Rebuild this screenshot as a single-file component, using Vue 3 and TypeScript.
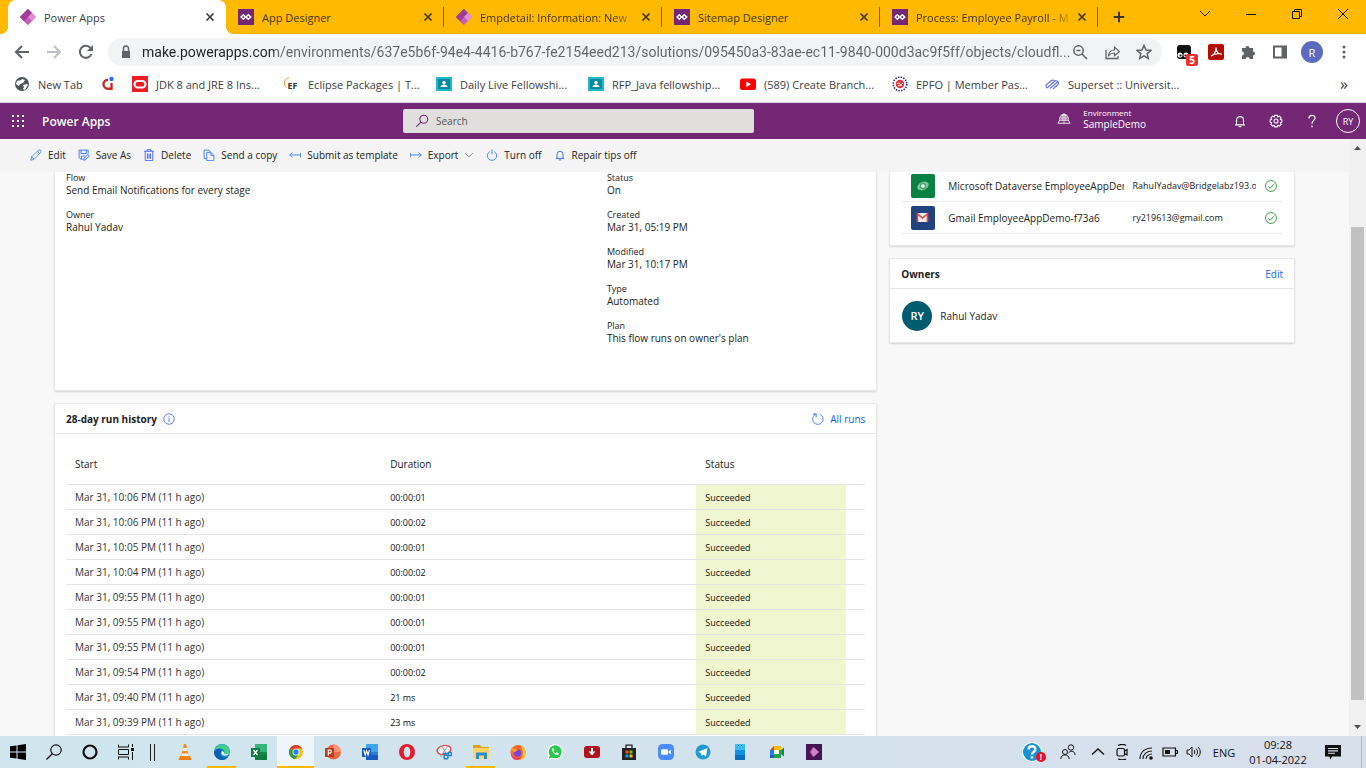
<script setup lang="ts">
import { ref } from 'vue'

interface Tab { title: string; icon: string; active?: boolean; faded?: boolean }
interface Bookmark { label: string; icon: string; size: string }
interface Command { label: string; icon: string; menu?: boolean }
interface Field { label: string; value: string }
interface Connection { icon: string; name: string; account: string }
interface Run { start: string; duration: string }
interface TaskApp { name: string; icon: string; state?: string }

const diamond =
  '<path d="M8 0 0 8l8 8z" fill="#8b2c83"/><path d="M4 4 8 8l-4 4-4-4z" fill="#a43a9b"/><path d="M8 0l8 8-8 8-4-4 4-4-4-4z" fill="#c55fb8"/><path d="M8 0l4 4-4 4-4-4z" fill="#9c3d93"/><path d="M12 4l4 4-4 4-4-4z" fill="#e08fd5"/>'
const dynamics =
  '<path d="M0 0h16v16H0z" fill="#742774"/><path d="M5.300 5.800 7.500 8l-2.200 2.200L3.100 8z" fill="none" stroke="#fff" stroke-width="1.500"/><path d="M10.300 5.800 12.700 8l-2.400 2.200L8 8z" fill="none" stroke="#fff" stroke-width="1.500"/>'
const classroom =
  '<path d="M0 1h16v14H0z" fill="#1fb6cf"/><path d="M2 3h12v10H2z" fill="#0b8a9b"/><circle cx="8" cy="6.500" r="1.700" fill="#fff"/><path d="M4.500 11c0-3.500 7-3.500 7 0z" fill="#fff"/>'
const office = (dark: string, mid: string, light: string) =>
  `<path d="M4 0h12v8H4z" fill="${light}"/><path d="M4 8h12v8H4z" fill="${mid}"/><path d="M4 11h12v5H4z" fill="${dark}"/><path d="M0 4h9v9H0z" fill="${dark}"/>`

const icons: Record<string, string> = {
  diamond,
  dynamics,
  classroom,
  globe: '<circle cx="8" cy="8" r="7" fill="#50555b"/><path d="M3 5c2-1 4 0 5-2l3 1-2 3-3 1-1 2-3-2zM9 9l4-1 1 1-3 5-2-1 1-2z" fill="#fff"/>',
  swirl: '<path d="M8 3.800A4.500 4.500 0 1 0 8 12.800M8 12.800h3.500V7" fill="none" stroke="#c62828" stroke-width="2.400"/><circle cx="11.500" cy="3" r="2.200" fill="#2f6bff"/>',
  oracle: '<path d="M0 0h16v16H0z" fill="#ee1c24"/><rect x="2.500" y="5" width="11" height="6.500" rx="3.200" fill="none" stroke="#fff" stroke-width="2"/>',
  eclipse: '<path d="M5 1.500A6 6 0 0 0 2.500 12" fill="none" stroke="#f7a14a"/><text x="3.500" y="13" font-family="Open Sans" font-weight="700" font-size="9" fill="#333">EF</text>',
  youtube: '<rect y="2.500" width="16" height="11.500" rx="2.500" fill="#f00"/><path d="M6.300 5.500v5.400L11 8.200z" fill="#fff"/>',
  epfo: '<circle cx="8" cy="8" r="6.800" fill="#fff" stroke="#25318d" stroke-width="1.600" stroke-dasharray="1.500 1.200"/><circle cx="8" cy="8" r="4.300" fill="#e2383f"/><path d="M5 8c2-3 3 3 6-1M6 10c2-2 3 1 4-1" stroke="#fff" fill="none"/>',
  superset: '<path d="M1.500 9.500 8 4M3 12 11.500 4.500M6 12.500 14 5.500M9 13l5.500-5M1.500 9.500 3 12M8 4l3.500.5L14 5.500l.5 2.500" stroke="#6f78e8" stroke-width="1.200" fill="none"/>',
  back: '<path d="M15 8H2M8 2 2 8l6 6" stroke="#5f6368" stroke-width="2" fill="none"/>',
  forward: '<path d="M1 8h13M8 2l6 6-6 6" stroke="#bdc1c6" stroke-width="2" fill="none"/>',
  reload: '<path d="M13.500 10A6 6 0 1 1 12.500 4" stroke="#5f6368" stroke-width="2" fill="none"/><path d="M15 1v6H9z" fill="#5f6368"/>',
  lock: '<path d="M4 7h8v7H4z" fill="#5f6368"/><path d="M5.500 7V4.500a2.500 2.500 0 0 1 5 0V7" stroke="#5f6368" stroke-width="1.500" fill="none"/>',
  zoomout: '<circle cx="6.500" cy="6.500" r="4.700" stroke="#5f6368" stroke-width="1.500" fill="none"/><path d="M10 10l5 5M4.500 6.500h4" stroke="#5f6368" stroke-width="1.600"/>',
  share: '<path d="M2 6v8.500h12V12" stroke="#5f6368" stroke-width="1.300" fill="none"/><path d="M4.500 11.500C5 7.500 7.500 6 10.500 6V3l5 4.500-5 4.300V9c-3 0-4.500.8-6 2.500z" stroke="#5f6368" stroke-width="1.200" fill="none"/>',
  star: '<path d="M8 1.500l2 4.500 4.900.400-3.700 3.200 1.100 4.800L8 11.900l-4.300 2.500 1.100-4.800L1.100 6.400 6 6z" stroke="#5f6368" stroke-width="1.500" fill="none"/>',
  tamper: '<rect x="1" y="1" width="14" height="14" rx="3" fill="#111"/><circle cx="4" cy="11" r="2.500" fill="#fff"/><circle cx="10" cy="11" r="2.500" fill="#fff"/><circle cx="4.500" cy="11.500" r="1.100" fill="#111"/><circle cx="9.500" cy="11.500" r="1.100" fill="#111"/>',
  acrobat: '<rect width="16" height="16" rx="2" fill="#b30b00"/><path d="M3 12c3-1 5-4 5-8.500C8 8 11 10.500 13.500 10 10 9 6 10 3 12z" stroke="#fff" stroke-width="1.300" fill="none"/>',
  puzzle: '<path d="M2 4h3.500a2 2 0 1 1 4 0H13v3.500a2 2 0 1 1 0 4V15H9.500a1.900 1.900 0 1 0-3.800 0H2v-3.500a2 2 0 1 0 0-4z" fill="#5f6368"/>',
  panel: '<rect x="2" y="2.500" width="12" height="11" fill="none" stroke="#5f6368" stroke-width="2"/><path d="M9.500 2.500H14v11H9.500z" fill="#5f6368"/>',
  dots: '<circle cx="8" cy="3" r="1.500" fill="#5f6368"/><circle cx="8" cy="8" r="1.500" fill="#5f6368"/><circle cx="8" cy="13" r="1.500" fill="#5f6368"/>',
  close: '<path d="M4 4l8 8M12 4l-8 8" stroke="currentColor" stroke-width="2"/>',
  plus: '<path d="M8 2v12M2 8h12" stroke="#3c3116" stroke-width="2.200"/>',
  wchev: '<path d="M3 5l5 5 5-5" stroke="#222" fill="none"/>',
  wmin: '<path d="M3 8.500h10" stroke="#111"/>',
  wmax: '<path d="M3.500 5.500h7v7h-7zM5.500 5V3.500h7v7H11" stroke="#111" fill="none"/>',
  wclose: '<path d="M3 3l10 10M13 3 3 13" stroke="#111"/>',
  search: '<circle cx="10" cy="6" r="4.500" stroke="#742774" stroke-width="1.200" fill="none"/><path d="M6.800 9.200 1.500 14.500" stroke="#742774" stroke-width="1.300"/>',
  env: '<path d="M1 14h14l-2-3.500H3z" fill="none" stroke="#fff"/><path d="M3.500 11a5 5 0 1 1 9 0M8 3v11M3 8h10M4 5.500h8M6 11V6l2-3 2 3v5" stroke="#fff" stroke-width=".9" fill="none"/>',
  bell: '<path d="M2.500 12.500h11M4 12.500V7a4 4 0 0 1 8 0v5.500M6.500 14.500h3" stroke="currentColor" stroke-width="1.300" fill="none"/>',
  gear: '<path d="M6.500 1.500h3l.6 1.800 1.800-.9 2 2-.9 1.800 1.700.6v2.600l-1.700.6.9 1.800-2 2-1.800-.9-.6 1.800h-3l-.6-1.800-1.800.9-2-2 .9-1.800-1.700-.6V6.800L3 6.200l-.9-1.800 2-2 1.800.9z" stroke="#fff" stroke-width="1.200" fill="none"/><circle cx="8" cy="8" r="2.300" fill="none" stroke="#fff" stroke-width="1.200"/>',
  help: '<path d="M4.500 5c0-4.500 7-4.500 7-.5C11.500 7.500 8 7 8 11" stroke="#fff" stroke-width="1.300" fill="none"/><path d="M8 13v2" stroke="#fff" stroke-width="1.500"/>',
  edit: '<path d="M1 15l1.200-4.500L11 1.700a1.800 1.800 0 0 1 3.200 3L5.500 13.700zM2.200 10.500l3.300 3.200M9.800 3l3.200 3.200" stroke="#3b7cff" stroke-width="1.100" fill="none"/>',
  save: '<path d="M7 13.500H3.500l-2-2v-10h12v5M4 1.500V6h7V1.500M4.500 13.500V9.500h5M7.500 15l.7-2.700 5-5 2 2-5 5z" stroke="#3b7cff" stroke-width="1.300" fill="none"/>',
  trash: '<path d="M1.500 3h13M5.500 3V1h5v2M3 3v12.500h10V3M6 6v7M8 6v7M10 6v7" stroke="#3b5cff" stroke-width="1.200" fill="none"/>',
  copy: '<path d="M5 12.500H1.500v-11H8L10 4M5 4.500h5.500l4 4v7H5zM10.500 4.500v4h4" stroke="#3b7cff" stroke-width="1.200" fill="none"/>',
  submit: '<path d="M15.500 5v6M15 8H1M4.500 4.500 1 8l3.500 3.500" stroke="#3b7cff" stroke-width="1.200" fill="none"/>',
  exporting: '<path d="M.5 5v6M1 8h14M11.500 4.500 15 8l-3.500 3.500" stroke="#3b7cff" stroke-width="1.200" fill="none"/>',
  power: '<path d="M5 3.500a6.200 6.200 0 1 0 6 0M8 .5V7" stroke="#3b7cff" stroke-width="1.200" fill="none"/>',
  chevron: '<path d="M2 5l6 6 6-6" stroke="#666" stroke-width="1.200" fill="none"/>',
  check: '<circle cx="8" cy="8" r="7.300" stroke="#2d9a35" stroke-width="1.200" fill="none"/><path d="M4.500 8.500 7 11l5-6" stroke="#2d9a35" stroke-width="1.200" fill="none"/>',
  info: '<circle cx="8" cy="8" r="7" stroke="#4a6dff" stroke-width="1.200" fill="none"/><path d="M8 7v5M8 4.500V6" stroke="#4a6dff" stroke-width="1.200"/>',
  refresh: '<path d="M10.500 1.700A7 7 0 1 1 4 2.300" stroke="#3b7cff" stroke-width="1.200" fill="none"/><path d="M1.500 1.500h4v4" stroke="#3b7cff" stroke-width="1.400" fill="none"/>',
  dataverse: '<rect width="24" height="24" rx="2" fill="#088142"/><ellipse cx="12" cy="12" rx="6" ry="4" transform="rotate(-25 12 12)" fill="#7fc79f"/><circle cx="12" cy="12" r="3.200" fill="#4aa673"/><circle cx="12" cy="12" r="1.800" fill="#fff"/>',
  gmail: '<rect width="24" height="24" rx="2" fill="#20427f"/><path d="M6 7h11v9H6z" fill="#f3e9e9"/><path d="M6.500 16V8l5 4 5-4v8" stroke="#dc4a41" stroke-width="1.600" fill="none"/>',
  windows: '<path d="M0 2.300 6.500 1.400v6.100H0zM7.500 1.200 16 0v7.500H7.500zM0 8.500h6.500v6.100L0 13.700zM7.500 8.500H16V16l-8.500-1.200z" fill="#000"/>',
  tsearch: '<circle cx="10" cy="6" r="5.200" stroke="#111" stroke-width="1.200" fill="none"/><path d="M6.300 9.700.5 15.500" stroke="#111" stroke-width="1.300"/>',
  cortana: '<circle cx="8" cy="8" r="6.500" stroke="#111" stroke-width="2.200" fill="none"/>',
  taskview: '<path d="M.5 3.500v-3M.5 3h10V.5M.5 12.500v3M.5 13h10v2.500M.5 5.500h10v5H.5zM14.500 0v3M14.500 8v8" stroke="#111" fill="none"/><path d="M13 4h3v3h-3z" fill="#111"/>',
  vlc: '<path d="M3 12h10l1.500 4h-13z" fill="#ee7d12"/><path d="M7 0h2l3.200 13H3.800z" fill="#f58a1f"/><path d="M6 4h4l.7 3H5.300zM4.700 9.500h6.600l.5 2.500H4.200z" fill="#eef1f2"/>',
  edge: '<circle cx="8" cy="8" r="8" fill="#168bd2"/><path d="M1 6C2-1 14-2 16 7c0 4-5 4-6 2 2-4-4-6-9-3z" fill="#46cf86"/><path d="M1 7c2-4 9-2 6 1-2 4 2 7 7 5-5 6-14 2-14-5z" fill="#0f5fae"/><path d="M8 7c-2 3 1 6 6 4l2-2c-3 2-7 1-6-1z" fill="#dff3f8"/>',
  excel: office('#107c41', '#17864b', '#33b577') + '<path d="M2.500 6l4 5M6.500 6l-4 5" stroke="#fff" stroke-width="1.300"/>',
  chrome: '<circle cx="8" cy="8" r="7" fill="#fbc116"/><path d="M8 8 1.900 4.500A7 7 0 0 1 14.100 4.500H8z" fill="#e33b2e"/><path d="M8 8 1.900 4.500A7 7 0 0 0 7.500 15L11 9.500z" fill="#2a9d48"/><circle cx="8" cy="8" r="3.500" fill="#fff"/><circle cx="8" cy="8" r="2.700" fill="#2f7de9"/>',
  powerpoint: '<circle cx="8.500" cy="8" r="7.500" fill="#e8694a"/><path d="M8 .5A7.500 7.500 0 0 1 16 8H8z" fill="#ff9478"/><path d="M0 4h9v9H0z" fill="#bd3b1d"/><path d="M3.300 11.500V6h1.500a1.500 1.500 0 0 1 0 3.200H3.300" stroke="#fff" stroke-width="1.200" fill="none"/>',
  word: office('#185abd', '#2b7cd3', '#41a5ee') + '<path d="M1.800 6l1.400 5 1.400-4.500L6 11l1.400-5" stroke="#fff" stroke-width="1.100" fill="none"/>',
  opera: '<circle cx="8" cy="8" r="8" fill="#e41b2d"/><ellipse cx="8" cy="8" rx="3.300" ry="5.500" fill="#d3e5ee"/>',
  snip: '<ellipse cx="8" cy="6" rx="7" ry="4.500" transform="rotate(-12 8 6)" stroke="#dd4b4b" stroke-width="1.400" fill="#f4f6f8"/><path d="M4 13 12 2M6 2l5 9" stroke="#9aa5ad"/><circle cx="10" cy="13" r="2" stroke="#2080cf" stroke-width="1.500" fill="none"/><circle cx="14" cy="10" r="1.700" stroke="#2080cf" stroke-width="1.500" fill="none"/><path d="M7 9.500h5" stroke="#2080cf" stroke-width="1.500"/>',
  explorer: '<path d="M0 1h7l1.500 2H16v4H0z" fill="#e0a01a"/><path d="M0 4h16v11H0z" fill="#fbd568"/><path d="M3 15V8.500h11V15h-3v-3.500H6V15z" fill="#2d8bd6"/>',
  firefox: '<circle cx="8" cy="8.500" r="7.500" fill="#ff6a2b"/><path d="M10 0c1 3 6 4 6 9s-4 7-8 7c5-2 7-6 2-16z" fill="#ffc62b"/><circle cx="7.500" cy="9" r="3.800" fill="#7a42d8"/><path d="M1 4c2 0 4 1 8 2-3 0-3 3-5 2S1 7 1 4z" fill="#ff9b1f"/><path d="M1 9c2 6 8 6 11 3-2 6-11 5-11-3z" fill="#f7305f"/>',
  whatsapp: '<circle cx="8.200" cy="7.800" r="7.800" fill="#fff"/><path d="M0 16l1.500-5 4 4z" fill="#fff"/><circle cx="8.200" cy="7.800" r="6.500" fill="#26c94d"/><path d="M1.700 14.500 3 11l2.500 2.500z" fill="#26c94d"/><path d="M5.300 4.500c-1 3 3 7.500 6 6.200l.5-1.400-2-1-1 1c-1.300-.6-1.700-1.300-2.200-2.300l.9-1-.8-1.800z" fill="#fff"/>',
  idm: '<rect y="2" width="16" height="12" rx="3" fill="#b1101d"/><path d="M8 4v5" stroke="#fff" stroke-width="2"/><path d="M4.500 7.500h7L8 11.500z" fill="#fff"/>',
  store: '<path d="M5 5V1.200h6V5" stroke="#222" stroke-width="1.300" fill="none"/><path d="M1 4h14v12H1z" fill="#222"/><path d="M4.500 6.500h3v3h-3z" fill="#f25022"/><path d="M8.500 6.500h3v3h-3z" fill="#7fba00"/><path d="M4.500 10.500h3v3h-3z" fill="#00a4ef"/><path d="M8.500 10.500h3v3h-3z" fill="#ffb900"/>',
  zoomapp: '<rect width="16" height="16" rx="4.500" fill="#4a8cff"/><rect x="3" y="5.300" width="7" height="5.500" rx="1.200" fill="#fff"/><path d="M10.500 7.500 13 5.500v5l-2.500-2z" fill="#fff"/>',
  telegram: '<circle cx="8" cy="8" r="7.500" fill="#2498d2"/><path d="M3 8l9.500-4L11 12.500 8 10.500l-1.500 1.500-.5-3z" fill="#fff"/>',
  phone: '<path d="M3 0h10v16H3z" fill="#0a6fc2"/><path d="M3 0h10v6H3z" fill="#35bdf2"/><path d="M3 6h10v5H3z" fill="#1292e0"/><path d="M6 1.500h1M9 1.500h1" stroke="#07508c"/>',
  meet: '<path d="M1 6l4-4v4z" fill="#e93f33"/><path d="M5 2h7v4H5z" fill="#fbbc05"/><path d="M1 6h4v5H1z" fill="#2a7be8"/><path d="M1 11h4v3H1z" fill="#1766d1"/><path d="M5 10h7v4H5z" fill="#22a24a"/><path d="M5 6h5v4H5z" fill="#fff"/><path d="M10 8l5-4.500v9z" fill="#13873a"/><path d="M10 6h3v4h-3z" fill="#22a24a"/>',
  papps: '<path d="M0 0h16v16H0z" fill="#451651"/><path d="M7 3 3.500 8 7 13z" fill="#a3469d"/><path d="M7.500 3 13 8l-5.500 5-2.500-5z" fill="#d184cb"/>',
  support: '<circle cx="8" cy="8" r="8" fill="#fff"/><circle cx="8" cy="8" r="7.200" fill="#1793d1"/><path d="M5.300 6c0-3.500 5.500-3.300 5.400-.2C10.700 8 8 7.800 8 10" stroke="#fff" stroke-width="1.900" fill="none"/><path d="M8 11.300v2" stroke="#fff" stroke-width="2"/>',
  people: '<circle cx="11" cy="3.500" r="2.700" stroke="#111" fill="none"/><circle cx="5" cy="8" r="2.500" stroke="#111" fill="none"/><path d="M.8 15c0-5.500 8.400-5.500 8.400 0M8.500 9c3-3.500 6.500-1.500 6.500 2" stroke="#111" fill="none"/>',
  tchev: '<path d="M2 10.500 8 5l6 5.500" stroke="#111" stroke-width="1.300" fill="none"/>',
  camera: '<rect x="3" y="4.500" width="7.500" height="7.500" rx="1.500" stroke="#111" stroke-width="1.200" fill="none"/><path d="M10.500 7l2.500-1.500V11l-2.500-1.500M4 1.500C7 0 10 0 12 1.500M4 15c3 1 6 1 8 0" stroke="#111" stroke-width="1.200" fill="none"/>',
  wifi: '<path d="M2 15C2 8 7 4 14 4M5 15c0-5 4-8 9-8M8 15c0-3 3-5 6-5" stroke="#222" stroke-width="1.200" fill="none"/><circle cx="13" cy="14" r="1.800" fill="#111"/>',
  battery: '<path d="M1 4h12.500v8H1zM13.500 6.500h2v3h-2" stroke="#111" stroke-width="1.200" fill="none"/><path d="M3 6h5v4H3z" fill="#111"/>',
  volume: '<path d="M1 6h2l3-3v10L3 10H1zM8 6c1 1 1 3 0 4M10 4.500c2 2 2 5 0 7M12 3c3 3 3 7 0 10" stroke="#111" fill="none"/>',
  notes: '<path d="M0 1h16v11.500H7L5.500 15.500 4.300 12.500H0z" fill="#111"/><path d="M3 4.500h10M3 6.900h10M3 9.300h7" stroke="#dbe1ea" stroke-width="1.100"/>',
}

const tabs: Tab[] = [
  { title: 'Power Apps', icon: 'diamond', active: true },
  { title: 'App Designer', icon: 'dynamics' },
  { title: 'Empdetail: Information: New', icon: 'diamond', faded: true },
  { title: 'Sitemap Designer', icon: 'dynamics' },
  { title: 'Process: Employee Payroll - M', icon: 'dynamics', faded: true },
]
const windowButtons = [
  ['wchev', 'Search tabs'], ['wmin', 'Minimize'], ['wmax', 'Restore'], ['wclose', 'Close'],
]
const address = ref(
  'make.powerapps.com/environments/637e5b6f-94e4-4416-b767-fe2154eed213/solutions/095450a3-83ae-ec11-9840-000d3ac9f5ff/objects/cloudfl...',
)
const search = ref('')
const bookmarks: Bookmark[] = [
  { label: 'New Tab', icon: 'globe', size: 'short' },
  { label: '', icon: 'swirl', size: 'bare' },
  { label: 'JDK 8 and JRE 8 Ins...', icon: 'oracle', size: 'long' },
  { label: 'Eclipse Packages | T...', icon: 'eclipse', size: 'long' },
  { label: 'Daily Live Fellowshi...', icon: 'classroom', size: 'long' },
  { label: 'RFP_Java fellowship...', icon: 'classroom', size: 'long' },
  { label: '(589) Create Branch...', icon: 'youtube', size: 'long' },
  { label: 'EPFO | Member Pas...', icon: 'epfo', size: 'long' },
  { label: 'Superset :: Universit...', icon: 'superset', size: 'long' },
]
const commands: Command[] = [
  { label: 'Edit', icon: 'edit' },
  { label: 'Save As', icon: 'save' },
  { label: 'Delete', icon: 'trash' },
  { label: 'Send a copy', icon: 'copy' },
  { label: 'Submit as template', icon: 'submit' },
  { label: 'Export', icon: 'exporting', menu: true },
  { label: 'Turn off', icon: 'power' },
  { label: 'Repair tips off', icon: 'bell' },
]
const flowFields: Field[] = [
  { label: 'Flow', value: 'Send Email Notifications for every stage' },
  { label: 'Owner', value: 'Rahul Yadav' },
]
const statusFields: Field[] = [
  { label: 'Status', value: 'On' },
  { label: 'Created', value: 'Mar 31, 05:19 PM' },
  { label: 'Modified', value: 'Mar 31, 10:17 PM' },
  { label: 'Type', value: 'Automated' },
  { label: 'Plan', value: "This flow runs on owner's plan" },
]
const connections: Connection[] = [
  { icon: 'dataverse', name: 'Microsoft Dataverse EmployeeAppDem', account: 'RahulYadav@Bridgelabz193.on' },
  { icon: 'gmail', name: 'Gmail EmployeeAppDemo-f73a6', account: 'ry219613@gmail.com' },
]
const runs: Run[] = [
  { start: '10:06', duration: '00:00:01' },
  { start: '10:06', duration: '00:00:02' },
  { start: '10:05', duration: '00:00:01' },
  { start: '10:04', duration: '00:00:02' },
  { start: '09:55', duration: '00:00:01' },
  { start: '09:55', duration: '00:00:01' },
  { start: '09:55', duration: '00:00:01' },
  { start: '09:54', duration: '00:00:02' },
  { start: '09:40', duration: '21 ms' },
  { start: '09:39', duration: '23 ms' },
]
const scroll = { top: 12.6, size: 84 }
const systemButtons: TaskApp[] = [
  { name: 'Start', icon: 'windows' },
  { name: 'Search', icon: 'tsearch' },
  { name: 'Cortana', icon: 'cortana' },
  { name: 'Task View', icon: 'taskview' },
]
const apps: TaskApp[] = [
  { name: 'VLC', icon: 'vlc' },
  { name: 'Edge', icon: 'edge', state: 'open' },
  { name: 'Excel', icon: 'excel' },
  { name: 'Chrome', icon: 'chrome', state: 'focused' },
  { name: 'PowerPoint', icon: 'powerpoint' },
  { name: 'Word', icon: 'word' },
  { name: 'Opera', icon: 'opera' },
  { name: 'Snipping Tool', icon: 'snip' },
  { name: 'File Explorer', icon: 'explorer', state: 'open' },
  { name: 'Firefox', icon: 'firefox' },
  { name: 'WhatsApp', icon: 'whatsapp' },
  { name: 'Downloader', icon: 'idm' },
  { name: 'Store', icon: 'store' },
  { name: 'Zoom', icon: 'zoomapp' },
  { name: 'Telegram', icon: 'telegram' },
  { name: 'Your Phone', icon: 'phone' },
  { name: 'Meet', icon: 'meet' },
  { name: 'Power Apps', icon: 'papps' },
]
const tray: TaskApp[] = [
  { name: 'Hidden icons', icon: 'tchev' },
  { name: 'Meet Now', icon: 'camera' },
  { name: 'Network', icon: 'wifi' },
  { name: 'Battery', icon: 'battery' },
  { name: 'Volume', icon: 'volume' },
]
</script>

<template>
  <div class="screen">
    <div class="tabstrip">
      <div v-for="(tab, i) in tabs" :key="i" class="tab" :class="{ active: tab.active }">
        <svg class="i16" viewBox="0 0 16 16" v-html="icons[tab.icon]" />
        <span class="tab-title" :class="{ faded: tab.faded }">{{ tab.title }}</span>
        <button class="tab-close" aria-label="Close tab">
          <svg class="i14" viewBox="0 0 16 16" v-html="icons.close" />
        </button>
      </div>
      <button class="new-tab" aria-label="New tab">
        <svg class="i14" viewBox="0 0 16 16" v-html="icons.plus" />
      </button>
      <div class="window-buttons">
        <button v-for="[icon, name] in windowButtons" :key="icon" :aria-label="name">
          <svg class="i16" viewBox="0 0 16 16" v-html="icons[icon]" />
        </button>
      </div>
    </div>

    <div class="toolbar">
      <button aria-label="Back"><svg class="i16" viewBox="0 0 16 16" v-html="icons.back" /></button>
      <button aria-label="Forward"><svg class="i16" viewBox="0 0 16 16" v-html="icons.forward" /></button>
      <button aria-label="Reload"><svg class="i16" viewBox="0 0 16 16" v-html="icons.reload" /></button>
      <div class="omnibox">
        <svg class="i16" viewBox="0 0 16 16" v-html="icons.lock" />
        <input v-model="address" class="address" aria-label="Address" />
        <div class="omni-actions">
          <button aria-label="Zoom"><svg class="i16" viewBox="0 0 16 16" v-html="icons.zoomout" /></button>
          <button aria-label="Share"><svg class="i16" viewBox="0 0 16 16" v-html="icons.share" /></button>
          <button aria-label="Bookmark"><svg class="i16" viewBox="0 0 16 16" v-html="icons.star" /></button>
        </div>
      </div>
      <button class="ext" aria-label="Extension">
        <svg class="i16" viewBox="0 0 16 16" v-html="icons.tamper" /><span class="badge">5</span>
      </button>
      <button aria-label="Acrobat"><svg class="i16" viewBox="0 0 16 16" v-html="icons.acrobat" /></button>
      <button aria-label="Extensions"><svg class="i16" viewBox="0 0 16 16" v-html="icons.puzzle" /></button>
      <button aria-label="Side panel"><svg class="i16" viewBox="0 0 16 16" v-html="icons.panel" /></button>
      <button class="profile" aria-label="Profile">R</button>
      <button aria-label="Menu"><svg class="i16" viewBox="0 0 16 16" v-html="icons.dots" /></button>
    </div>

    <nav class="bookmarks">
      <a v-for="(b, i) in bookmarks" :key="i" href="#" :class="b.size" :aria-label="b.label || 'Bookmark'">
        <svg class="i16" viewBox="0 0 16 16" v-html="icons[b.icon]" />
        <span v-if="b.label">{{ b.label }}</span>
      </a>
      <button class="more">»</button>
    </nav>

    <header class="suite">
      <div class="brand">
        <button class="waffle" aria-label="App launcher"><i v-for="n in 9" :key="n" /></button>
        <a href="#">Power Apps</a>
      </div>
      <label class="search">
        <svg class="i14" viewBox="0 0 16 16" v-html="icons.search" />
        <input v-model="search" type="text" placeholder="Search" aria-label="Search" />
      </label>
      <div class="suite-right">
        <button class="env">
          <svg class="i14" viewBox="0 0 16 16" v-html="icons.env" />
          <span><small>Environment</small>SampleDemo</span>
        </button>
        <button aria-label="Notifications"><svg class="i14" viewBox="0 0 16 16" v-html="icons.bell" /></button>
        <button aria-label="Settings"><svg class="i14" viewBox="0 0 16 16" v-html="icons.gear" /></button>
        <button aria-label="Help"><svg class="i14" viewBox="0 0 16 16" v-html="icons.help" /></button>
        <button class="me">RY</button>
      </div>
    </header>

    <div class="body">
      <main>
        <div class="commands">
          <button v-for="c in commands" :key="c.label">
            <svg class="i12" viewBox="0 0 16 16" v-html="icons[c.icon]" />
            {{ c.label }}
            <svg v-if="c.menu" class="i10" viewBox="0 0 16 16" v-html="icons.chevron" />
          </button>
        </div>

        <div class="content">
          <div class="left">
            <section class="card details">
              <dl>
                <div v-for="f in flowFields" :key="f.label"><dt>{{ f.label }}</dt><dd>{{ f.value }}</dd></div>
              </dl>
              <dl>
                <div v-for="f in statusFields" :key="f.label"><dt>{{ f.label }}</dt><dd>{{ f.value }}</dd></div>
              </dl>
            </section>

            <section class="card history">
              <div class="card-head">
                <h2>28-day run history</h2>
                <svg class="i12" viewBox="0 0 16 16" v-html="icons.info" />
                <a href="#" class="all"><svg class="i12" viewBox="0 0 16 16" v-html="icons.refresh" />All runs</a>
              </div>
              <table>
                <colgroup><col /><col /><col class="c-status" /><col class="c-end" /></colgroup>
                <thead>
                  <tr><th>Start</th><th>Duration</th><th>Status</th><th /></tr>
                </thead>
                <tbody>
                  <tr v-for="(r, i) in runs" :key="i">
                    <td><a href="#">Mar 31, {{ r.start }} PM (11 h ago)</a></td>
                    <td class="small">{{ r.duration }}</td>
                    <td class="small ok">Succeeded</td>
                    <td />
                  </tr>
                </tbody>
              </table>
            </section>
          </div>

          <div class="right">
            <section class="card connections">
              <ul>
                <li v-for="c in connections" :key="c.name">
                  <svg class="i24" viewBox="0 0 24 24" v-html="icons[c.icon]" />
                  <span class="cname">{{ c.name }}</span>
                  <span class="account">{{ c.account }}</span>
                  <svg class="i12" viewBox="0 0 16 16" v-html="icons.check" />
                </li>
              </ul>
            </section>
            <section class="card">
              <div class="card-head"><h2>Owners</h2><a href="#" class="all">Edit</a></div>
              <div class="owner"><span class="persona">RY</span>Rahul Yadav</div>
            </section>
          </div>
        </div>
      </main>

      <div class="scrollbar">
        <svg class="arrow" viewBox="0 0 17 17"><path d="M5 11l3.500-4L12 11z" fill="#505050" /></svg>
        <div class="track">
          <div class="thumb" :style="{ height: scroll.size + '%', top: scroll.top + '%' }" />
        </div>
        <svg class="arrow" viewBox="0 0 17 17"><path d="M5 6l3.500 4L12 6z" fill="#505050" /></svg>
      </div>
    </div>

    <footer class="taskbar">
      <button v-for="b in systemButtons" :key="b.name" class="sys" :aria-label="b.name">
        <svg class="i16" viewBox="0 0 16 16" v-html="icons[b.icon]" />
      </button>
      <span class="grip" />
      <button v-for="a in apps" :key="a.name" class="app" :class="a.state" :aria-label="a.name">
        <svg class="i16" viewBox="0 0 16 16" v-html="icons[a.icon]" />
      </button>
      <div class="tray">
        <button class="support" aria-label="Support">
          <svg class="i20" viewBox="0 0 16 16" v-html="icons.support" /><span class="alert">!</span>
        </button>
        <button class="people" aria-label="People"><svg class="i16" viewBox="0 0 16 16" v-html="icons.people" /></button>
        <button v-for="t in tray" :key="t.name" :aria-label="t.name">
          <svg class="i16" viewBox="0 0 16 16" v-html="icons[t.icon]" />
        </button>
        <button class="lang">ENG</button>
        <button class="clock"><span>09:28</span><span>01-04-2022</span></button>
        <button class="notes" aria-label="Notifications"><svg class="i16" viewBox="0 0 16 16" v-html="icons.notes" /></button>
        <span class="peek" />
      </div>
    </footer>
  </div>
</template>

<style>
html,
body {
  background: #f8f8f8;
}
</style>

<style scoped>
.screen {
  height: 100vh;
  display: flex;
  flex-direction: column;
  overflow: hidden;
  font-family: 'Open Sans', 'Noto Sans', sans-serif;
  font-size: 10px;
  color: #222;
}
.screen * {
  box-sizing: border-box;
}
button,
input {
  font: inherit;
  color: inherit;
  border: 0;
  padding: 0;
  margin: 0;
  background: none;
}
button {
  display: flex;
  align-items: center;
  justify-content: center;
  flex: none;
  white-space: nowrap;
}
a {
  color: inherit;
  text-decoration: none;
}
svg {
  display: block;
  flex: none;
}
.i10 { width: 10px; height: 10px; }
.i12 { width: 12px; height: 12px; }
.i14 { width: 14px; height: 14px; }
.i16 { width: 16px; height: 16px; }
.i20 { width: 20px; height: 20px; }
.i24 { width: 24px; height: 24px; }

.tabstrip {
  flex: none;
  height: 34px;
  display: flex;
  background: #ffb900;
  padding-left: 8px;
  font-size: 11px;
  color: #443716;
}
.tab {
  flex: 0 1 218px;
  min-width: 0;
  display: flex;
  align-items: center;
  padding: 0 9px 0 12px;
  position: relative;
}
.tab:not(.active)::after {
  content: '';
  width: 1px;
  height: 20px;
  background: #806010;
  position: absolute;
  right: 0;
  top: 7px;
}
.tab.active {
  background: #fff;
  border-radius: 8px 8px 0 0;
  color: #3c4043;
}
.tab.active::before,
.tab.active::after {
  content: '';
  width: 8px;
  height: 8px;
  position: absolute;
  bottom: 0;
}
.tab.active::before {
  left: -8px;
  background: radial-gradient(circle at 0 0, transparent 8px, #fff 8px);
}
.tab.active::after {
  right: -8px;
  background: radial-gradient(circle at 100% 0, transparent 8px, #fff 8px);
}
.tab-title {
  flex: 1;
  min-width: 0;
  margin-left: 8px;
  overflow: hidden;
  white-space: nowrap;
}
.tab-title.faded {
  mask-image: linear-gradient(to right, #000 84%, transparent);
}
.new-tab {
  width: 42px;
}
.window-buttons {
  margin-left: auto;
  display: flex;
  height: 28px;
}
.window-buttons button {
  width: 46px;
}

.toolbar {
  flex: none;
  height: 36px;
  display: flex;
  align-items: center;
  background: #fff;
  padding: 0 6px;
}
.toolbar > button {
  width: 32px;
  height: 28px;
}
.omnibox {
  flex: 1;
  min-width: 0;
  height: 28px;
  display: flex;
  align-items: center;
  background: #f1f3f4;
  border-radius: 14px;
  padding: 0 10px;
  margin: 0 6px;
}
.omni-actions {
  display: flex;
  gap: 16px;
}
.address {
  flex: 1;
  min-width: 0;
  margin-left: 8px;
  font-family: Roboto, 'Open Sans', sans-serif;
  font-size: 14px;
  background: linear-gradient(to right, #202124 132px, #5f6368 132px);
  background-clip: text;
  -webkit-background-clip: text;
  color: transparent;
}
.ext {
  position: relative;
}
.badge {
  position: absolute;
  right: 2px;
  bottom: 0;
  width: 12px;
  height: 12px;
  border-radius: 2px;
  background: #ee2f2f;
  color: #fff;
  font-size: 10px;
  font-weight: 700;
  line-height: 12px;
}
.toolbar .profile {
  width: 22px;
  height: 22px;
  margin: 0 5px;
  border-radius: 50%;
  background: #5c6bc0;
  color: #fff;
  font-size: 11px;
}

.bookmarks {
  flex: none;
  height: 33px;
  display: flex;
  padding: 0 14px;
  background: #fff;
  border-bottom: 1px solid #d8dadd;
  font-size: 11px;
  color: #3c4043;
}
.bookmarks a {
  display: flex;
  align-items: center;
  gap: 8px;
  min-width: 0;
  padding-bottom: 4px;
  white-space: nowrap;
}
.bookmarks .short { flex: 0 1 86px; }
.bookmarks .bare { flex: 0 0 32px; }
.bookmarks .long { flex: 0 1 152px; }
.more {
  margin-left: auto;
  padding: 0 4px 4px;
  font-size: 16px;
}

.suite {
  flex: none;
  height: 36px;
  display: flex;
  align-items: center;
  background: #742774;
  color: #fff;
}
.brand {
  flex: 0 1 403px;
  display: flex;
  align-items: center;
  gap: 18px;
  padding-left: 12px;
  font-size: 12px;
  font-weight: 600;
}
.waffle {
  display: grid;
  grid-template-columns: repeat(3, 2px);
  gap: 3px;
}
.waffle i {
  width: 2px;
  height: 2px;
  background: #fff;
}
.search {
  flex: 0 1 351px;
  min-width: 0;
  height: 24px;
  display: flex;
  align-items: center;
  gap: 7px;
  padding: 0 12px;
  background: #e1dfdd;
  border-radius: 2px;
}
.search input {
  flex: 1;
  min-width: 0;
  outline: 0;
}
.search input::placeholder {
  color: #555;
}
.suite-right {
  margin-left: auto;
  display: flex;
  align-items: center;
  padding-right: 6px;
}
.suite-right button {
  width: 36px;
  height: 36px;
}
.suite-right .env {
  width: auto;
  gap: 12px;
  margin-right: 76px;
  padding-bottom: 6px;
  line-height: 12px;
  text-align: left;
}
.env small {
  display: block;
  font-size: 8px;
  line-height: 11px;
}
.suite-right .me {
  width: 24px;
  height: 24px;
  margin-left: 6px;
  border: 1px solid #fff;
  border-radius: 50%;
  font-size: 9px;
}

.body {
  flex: 1;
  min-height: 0;
  display: flex;
}
main {
  flex: 1;
  min-width: 0;
  display: flex;
  flex-direction: column;
}
.commands {
  flex: none;
  height: 33px;
  display: flex;
  gap: 12px;
  padding: 0 0 2px 30px;
  background: #f4f4f4;
}
.commands button {
  gap: 6px;
  color: #222;
}
.commands svg {
  color: #3b6cff;
}
.content {
  flex: 1;
  min-height: 0;
  overflow: hidden;
  display: grid;
  grid-template-columns: repeat(3, minmax(0, 1fr));
  gap: 12px;
  padding: 0 54px;
  background: #f8f8f8;
}
.left {
  grid-column: span 2;
}
.left,
.right {
  display: flex;
  flex-direction: column;
  gap: 12px;
}
.card {
  flex: none;
  background: #fff;
  border: 1px solid #e8e8e8;
  border-radius: 2px;
  box-shadow: 0 1px 2px rgba(0, 0, 0, 0.14);
}
.details {
  border-top: 0;
  display: grid;
  grid-template-columns: 2fr 1fr;
  gap: 24px;
  padding: 0 11px 33px;
}
dl {
  margin: 0;
}
dl div {
  margin-bottom: 12px;
}
dt {
  font-size: 9px;
  line-height: 12px;
}
dd {
  margin: 0;
  line-height: 13px;
}
.card-head {
  height: 30px;
  display: flex;
  align-items: center;
  gap: 6px;
  padding: 0 11px;
  border-bottom: 1px solid #e8e8e8;
}
h2 {
  margin: 0;
  font-size: 10px;
  font-weight: 700;
}
.all {
  margin-left: auto;
  display: flex;
  align-items: center;
  gap: 6px;
  color: #0f62fe;
}
.history {
  padding-bottom: 40px;
}
table {
  width: calc(100% - 22px);
  margin: 0 11px;
  table-layout: fixed;
  border-collapse: separate;
  border-spacing: 0;
}
.c-status { width: 150px; }
.c-end { width: 19px; }
th {
  height: 51px;
  padding: 10px 9px 0;
  border-bottom: 1px solid #e5e5e5;
  text-align: left;
  font-weight: 400;
}
td {
  height: 25px;
  padding: 0 9px;
  border-bottom: 1px solid #e5e5e5;
  color: #333;
}
.small {
  font-size: 9px;
  color: #111;
}
.ok {
  background: #f0f6d0;
}
.connections {
  border-top: 0;
  padding: 0 11px 11px 12px;
}
ul {
  list-style: none;
  margin: -2px 0 0;
  padding: 0;
}
li {
  height: 32px;
  display: grid;
  grid-template-columns: 24px minmax(0, 180fr) minmax(0, 124fr) 12px;
  align-items: center;
  gap: 9px;
  padding: 0 6px 0 9px;
  border-bottom: 1px solid #ececec;
}
.cname,
.account {
  overflow: hidden;
  white-space: nowrap;
}
.cname {
  margin-left: 4px;
}
.account {
  font-size: 9px;
}
.owner {
  display: flex;
  align-items: center;
  gap: 8px;
  padding: 12px 12px 11px;
}
.persona {
  width: 30px;
  height: 30px;
  border-radius: 50%;
  background: #005b70;
  color: #fff;
  font-size: 11px;
  font-weight: 600;
  line-height: 30px;
  text-align: center;
}
.scrollbar {
  flex: none;
  width: 17px;
  display: flex;
  flex-direction: column;
  background: #f1f1f1;
}
.arrow {
  width: 17px;
  height: 17px;
}
.track {
  flex: 1;
}
.thumb {
  position: relative;
  margin: 0 2px;
  background: #c1c1c1;
}

.taskbar {
  flex: none;
  height: 32px;
  display: flex;
  background: linear-gradient(to right, #cfe6ee, #d3e3ee 50%, #d7dfeb);
  font-size: 11px;
  color: #111;
}
.sys {
  width: 36px;
}
.grip {
  width: 5px;
  margin: 8px 11px 7px 6px;
  border: solid #222;
  border-width: 0 1px;
}
.app {
  width: 37px;
  border-bottom: 2px solid transparent;
  border-top: 2px solid transparent;
}
.app.open {
  width: 29px;
  margin: 0 4px;
  border-bottom-color: #ffb900;
}
.app.focused {
  background: #eff6fa;
  border-bottom-color: #ffb900;
}
.tray {
  margin-left: auto;
  display: flex;
}
.tray button {
  width: 24px;
}
.tray .support {
  width: 36px;
  position: relative;
}
.alert {
  position: absolute;
  right: 4px;
  bottom: 6px;
  width: 10px;
  height: 10px;
  border-radius: 50%;
  background: #e81123;
  color: #fff;
  font-size: 8px;
  font-weight: 700;
  line-height: 10px;
}
.tray .people {
  width: 36px;
}
.tray .lang {
  width: 36px;
}
.tray .clock {
  width: 72px;
  flex-direction: column;
  line-height: 15px;
}
.tray .notes {
  width: 38px;
}
.peek {
  width: 5px;
  margin-left: 9px;
  border-left: 1px solid #b4bcc8;
}
</style>
